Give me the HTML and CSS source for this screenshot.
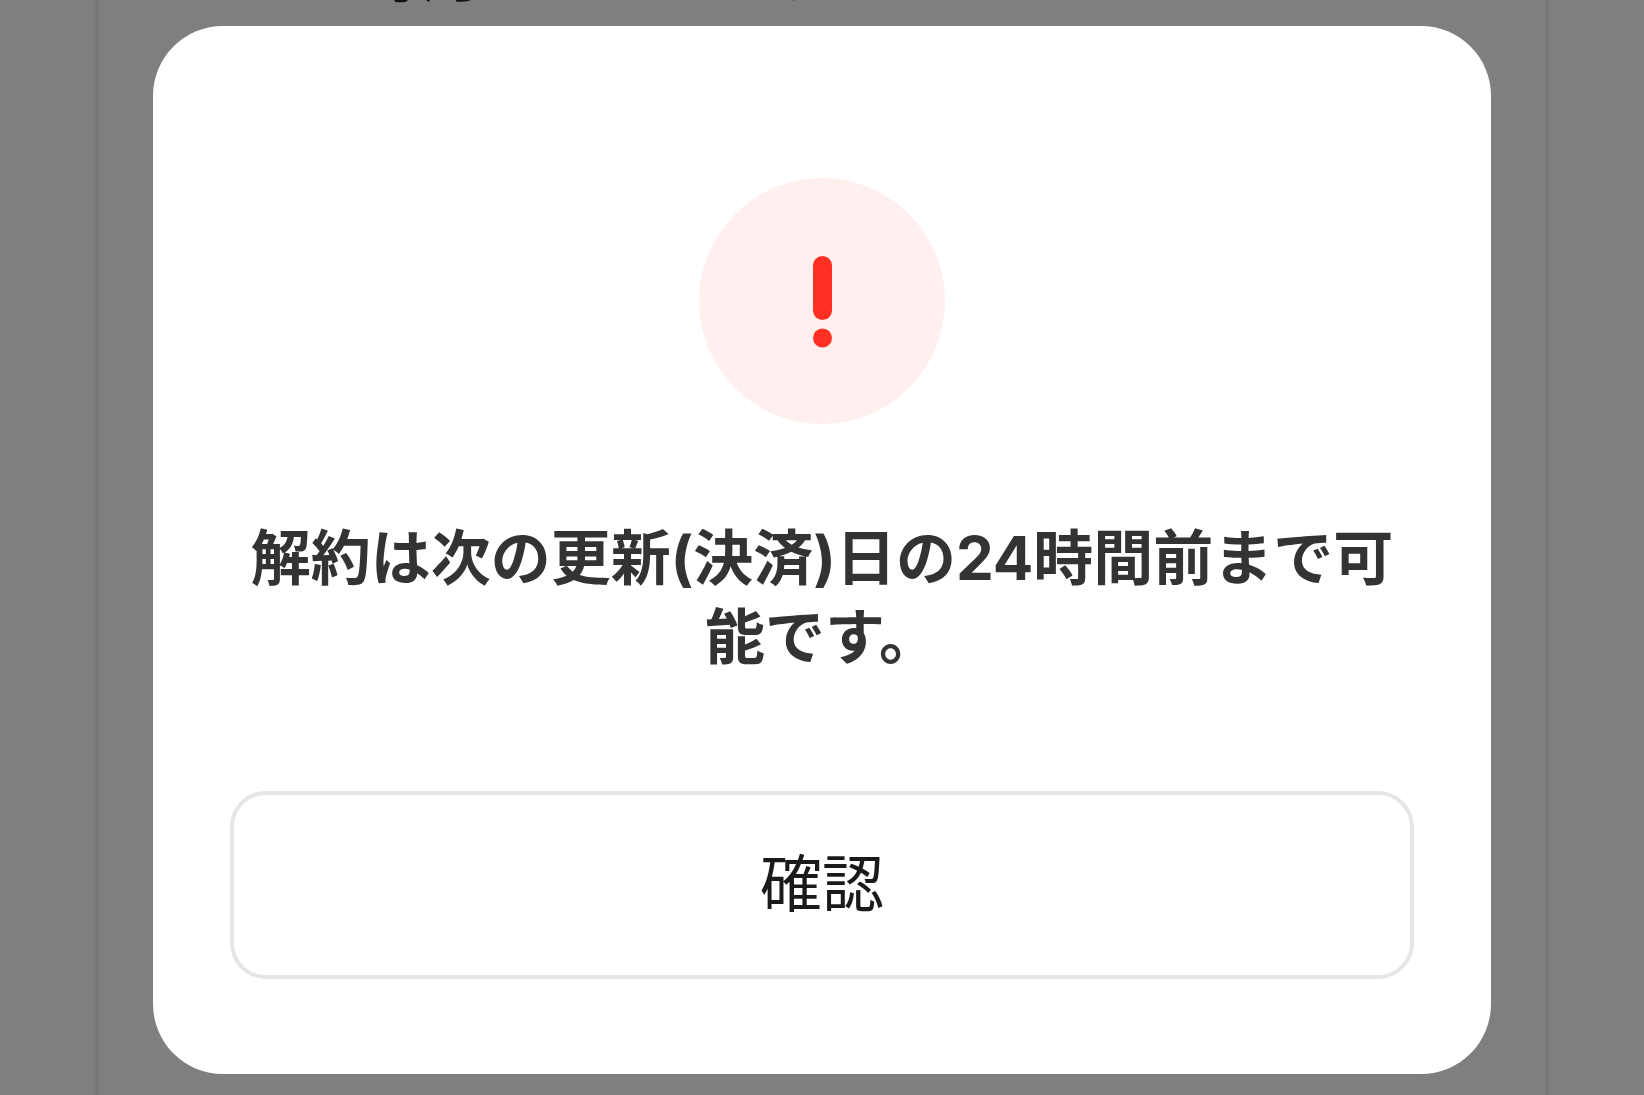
FILE: index.html
```html
<!DOCTYPE html>
<html lang="ja">
<head>
    <meta charset="UTF-8">
    <meta name="viewport" content="width=device-width, initial-scale=1.0">
    <title>解約</title>
    <link rel="stylesheet" href="styles.css">
</head>
<body>
    <main class="page">
        <p class="page-text">毎月のエラーフ、エキ</p>
    </main>
    <div class="overlay">
        <div class="modal" role="alertdialog" aria-modal="true" aria-labelledby="message">
            <svg class="icon" viewBox="0 0 246 246" aria-hidden="true">
                <circle cx="123" cy="123" r="123" fill="#ffefee"/>
                <rect x="114" y="78" width="19" height="64" rx="9.5" fill="#ff3023"/>
                <circle cx="123.5" cy="160" r="9.5" fill="#ff3023"/>
            </svg>
            <h1 class="message" id="message">解約は次の更新(決済)日の24時間前まで可能です。</h1>
            <button class="confirm" type="button">確認</button>
        </div>
    </div>
</body>
</html>
```

FILE: styles.css
```css
* {
    box-sizing: border-box;
}
body {
    margin: 0;
    background-color: #fff;
    font-family: Inter, "Noto Sans CJK JP", sans-serif;
}
.page {
    height: 100vh;
    margin: 0 95px;
    border: solid #f0f0f0;
    border-width: 0 4px;
    overflow: hidden;
}
.page-text {
    margin: -60px 0 0 264px;
    font-size: 60px;
    line-height: 70px;
    color: #222;
}
.overlay {
    position: fixed;
    inset: 0;
    display: flex;
    align-items: flex-start;
    justify-content: center;
    padding: 26px 153px 20px;
    background-color: rgba(0, 0, 0, 0.5);
}
.modal {
    display: flex;
    flex-direction: column;
    align-items: center;
    width: 100%;
    padding: 152px 77px 95px;
    border-radius: 70px;
    background-color: #fff;
}
.icon {
    width: 246px;
    height: 246px;
}
.message {
    margin: 95px 0 114px;
    padding: 0 20px;
    font-size: 60px;
    font-weight: 700;
    line-height: 79px;
    text-align: center;
    color: #333;
}
.confirm {
    width: 100%;
    padding: 50px 0;
    border: 4px solid #e6e6e6;
    border-radius: 36px;
    background-color: #fff;
    font-family: inherit;
    font-size: 62px;
    line-height: 80px;
    color: #1a1a1a;
    cursor: pointer;
}
```
